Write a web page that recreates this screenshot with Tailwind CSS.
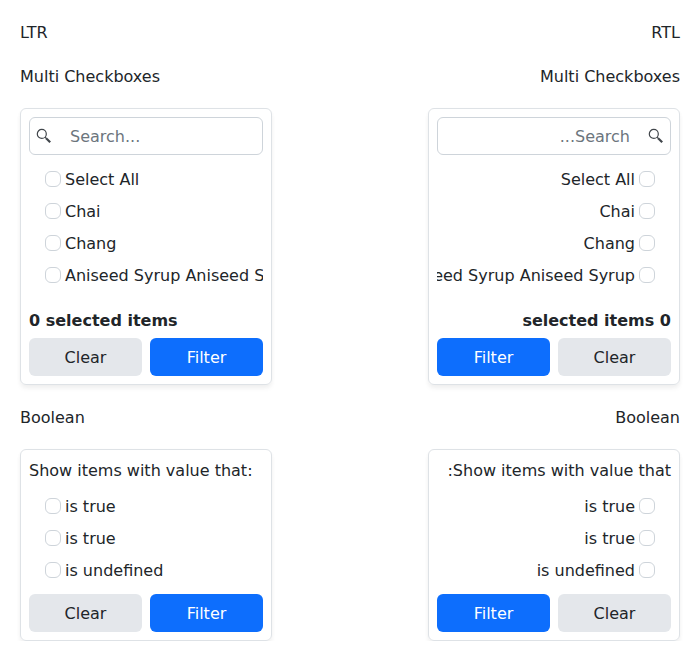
<!DOCTYPE html>
<html lang="en">
<head>
<meta charset="utf-8">
<title>Filter menus</title>
<script src="https://cdn.jsdelivr.net/npm/@tailwindcss/browser@4"></script>
</head>
<body class="bg-white text-[#212529] text-base leading-6 font-['DejaVu_Sans',sans-serif]">
<template id="column">
  <p class="mb-[19px] pt-px" data-title></p>
  <p class="mb-[19px] pt-px">Multi Checkboxes</p>
  <div class="mb-5 rounded-md border border-[#dee2e6] p-2 shadow-[0_4px_5px_rgba(0,0,0,0.04),0_2px_4px_rgba(0,0,0,0.03)]">
    <div class="flex h-[38px] items-center rounded-md border border-[#ced4da]">
      <svg class="ms-[6px] size-4 shrink-0" viewBox="0 0 16 16" fill="none" stroke="#41464b"><circle cx="5.8" cy="5.9" r="4.5" stroke-width="1.2"/><path d="M9.1 9.2L10.5 10.6" stroke-width="1.2"/><path d="M10.1 10.2L14.2 14.3" stroke-width="2.2"/></svg>
      <span class="ms-[18px] pt-px text-[#6c757d]">Search...</span>
    </div>
    <ul class="mt-2 overflow-hidden">
      <li class="flex h-8 items-center gap-1 ps-4 whitespace-nowrap"><i class="size-4 shrink-0 rounded-md border border-[#ced4da]"></i><span class="pt-px">Select All</span></li>
      <li class="flex h-8 items-center gap-1 ps-4 whitespace-nowrap"><i class="size-4 shrink-0 rounded-md border border-[#ced4da]"></i><span class="pt-px">Chai</span></li>
      <li class="flex h-8 items-center gap-1 ps-4 whitespace-nowrap"><i class="size-4 shrink-0 rounded-md border border-[#ced4da]"></i><span class="pt-px">Chang</span></li>
      <li class="flex h-8 items-center gap-1 ps-4 whitespace-nowrap"><i class="size-4 shrink-0 rounded-md border border-[#ced4da]"></i><span class="pt-px">Aniseed Syrup Aniseed Syrup</span></li>
    </ul>
    <p class="mt-[17px] pt-px font-bold">0 selected items</p>
    <div class="mt-[5px] grid grid-cols-2 gap-2">
      <button class="h-[38px] rounded-md bg-[#e4e7eb] pt-px">Clear</button>
      <button class="h-[38px] rounded-md bg-[#0d6efd] pt-px text-white">Filter</button>
    </div>
  </div>
  <p class="mb-[19px] pt-px">Boolean</p>
  <div class="rounded-md border border-[#dee2e6] p-2 shadow-[0_4px_5px_rgba(0,0,0,0.04),0_2px_4px_rgba(0,0,0,0.03)]">
    <p class="pt-px whitespace-nowrap">Show items with value that:</p>
    <ul class="mt-[7px]">
      <li class="flex h-8 items-center gap-1 ps-4"><i class="size-4 shrink-0 rounded-md border border-[#ced4da]"></i><span class="pt-px">is true</span></li>
      <li class="flex h-8 items-center gap-1 ps-4"><i class="size-4 shrink-0 rounded-md border border-[#ced4da]"></i><span class="pt-px">is true</span></li>
      <li class="flex h-8 items-center gap-1 ps-4"><i class="size-4 shrink-0 rounded-md border border-[#ced4da]"></i><span class="pt-px">is undefined</span></li>
    </ul>
    <div class="mt-2 grid grid-cols-2 gap-2">
      <button class="h-[38px] rounded-md bg-[#e4e7eb] pt-px">Clear</button>
      <button class="h-[38px] rounded-md bg-[#0d6efd] pt-px text-white">Filter</button>
    </div>
  </div>
</template>
<main class="flex justify-between px-5 pt-5">
  <section dir="ltr" class="w-[252px]"></section>
  <section dir="rtl" class="w-[252px]"></section>
</main>
<script>
  const template = document.getElementById('column');
  document.querySelectorAll('section').forEach(section => {
    section.append(template.content.cloneNode(true));
    section.querySelector('[data-title]').textContent = section.dir.toUpperCase();
  });
</script>
</body>
</html>
